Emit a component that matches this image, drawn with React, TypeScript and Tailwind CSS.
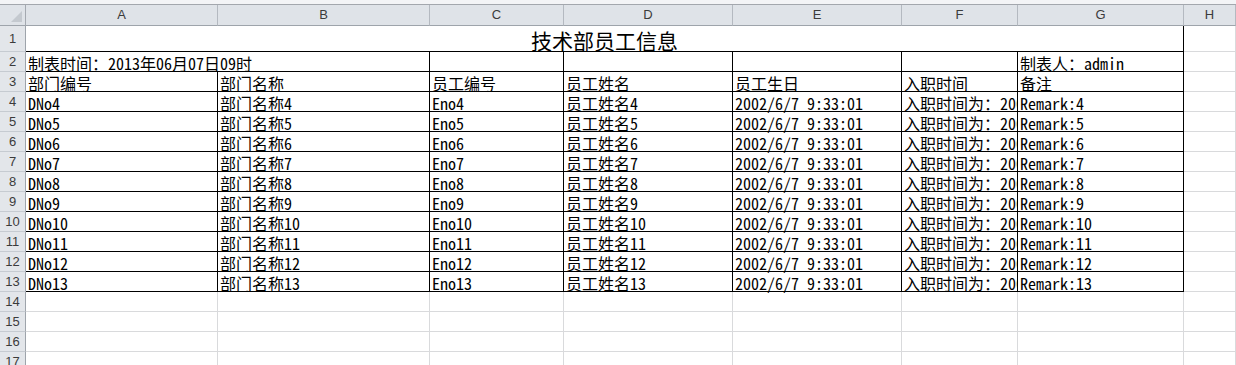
import React from "react";

const cols = ["A", "B", "C", "D", "E", "F", "G", "H"];
const ids = [4, 5, 6, 7, 8, 9, 10, 11, 12, 13];

const cellFont = {
  fontFamily: '"Noto Sans Mono CJK SC", "Noto Sans CJK SC", monospace',
};

function RowHead({ n, h }: { n: number; h: string }) {
  return (
    <div
      className={`${h} flex items-center justify-center bg-[#e3e6ea] border-r border-b border-r-[#9ea4ab] border-b-[#c6cbd1] text-[13px] text-[#3b3b3b] font-['Liberation_Sans',sans-serif]`}
    >
      {n}
    </div>
  );
}

function Cell({
  text,
  black,
  span,
}: {
  text?: string;
  black?: boolean;
  span?: string;
}) {
  return (
    <div
      style={cellFont}
      className={`h-[20px] ${span ?? ""} flex items-end overflow-x-clip whitespace-nowrap pl-[2px] text-[16px] leading-[16px] text-black border-r border-b ${
        black ? "border-black" : "border-[#d9dadc]"
      }`}
    >
      {text}
    </div>
  );
}

export default function App() {
  return (
    <div className="w-[1236px] h-[365px] overflow-hidden bg-white">
      {/* strip above headers */}
      <div className="h-[5px] bg-[#f3f4f6] border-b border-[#a3a7ad]" />

      <div className="grid grid-cols-[26px_192px_212px_134px_169px_169px_116px_166px_52px]">
        {/* column headers */}
        <div className="h-[21px] relative bg-[#dfe3e8] border-r border-b border-r-[#a4a9b0] border-b-[#9ea4ab]">
          <svg
            className="absolute right-[3px] bottom-[3px]"
            width="11"
            height="11"
            viewBox="0 0 11 11"
          >
            <path d="M11 0 L11 11 L0 11 Z" fill="#c4c9cf" />
          </svg>
        </div>
        {cols.map((c) => (
          <div
            key={c}
            className="h-[21px] flex items-center justify-center bg-[#dfe3e8] border-r border-b border-r-[#b4b9c0] border-b-[#9ea4ab] text-[13px] text-[#3b3b3b] font-['Liberation_Sans',sans-serif]"
          >
            {c}
          </div>
        ))}

        {/* row 1 */}
        <RowHead n={1} h="h-[26px]" />
        <div className="col-span-7 h-[26px] flex items-end justify-center border-r border-b border-black text-[21px] leading-[22px] text-black font-['Noto_Sans_CJK_SC',sans-serif]">
          技术部员工信息
        </div>
        <div className="h-[26px] border-r border-b border-[#d9dadc]" />

        {/* row 2 */}
        <RowHead n={2} h="h-[20px]" />
        <Cell text="制表时间：2013年06月07日09时" black span="col-span-2" />
        <Cell black />
        <Cell black />
        <Cell black />
        <Cell black />
        <Cell text="制表人：admin" black />
        <Cell />

        {/* row 3 */}
        <RowHead n={3} h="h-[20px]" />
        {["部门编号", "部门名称", "员工编号", "员工姓名", "员工生日", "入职时间", "备注"].map(
          (t) => (
            <Cell key={t} text={t} black />
          )
        )}
        <Cell />

        {ids.map((i) => (
          <React.Fragment key={i}>
            <RowHead n={i} h="h-[20px]" />
            <Cell text={`DNo${i}`} black />
            <Cell text={`部门名称${i}`} black />
            <Cell text={`Eno${i}`} black />
            <Cell text={`员工姓名${i}`} black />
            <Cell text="2002/6/7 9:33:01" black />
            <Cell text="入职时间为：2002-06-07" black />
            <Cell text={`Remark:${i}`} black />
            <Cell />
          </React.Fragment>
        ))}

        {[14, 15, 16, 17].map((i) => (
          <React.Fragment key={i}>
            <RowHead n={i} h="h-[20px]" />
            {cols.map((c) => (
              <Cell key={c} />
            ))}
          </React.Fragment>
        ))}
      </div>
    </div>
  );
}
